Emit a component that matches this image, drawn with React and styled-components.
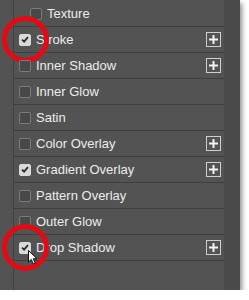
import styled, { createGlobalStyle } from "styled-components"

const Global = createGlobalStyle`
  body {
    margin: 0;
    background: #fff;
    font-family: "Liberation Sans", Arial, sans-serif;
  }
`

const styles = [
  { name: "Texture", indent: true },
  { name: "Stroke", checked: true, plus: true, ring: true },
  { name: "Inner Shadow", plus: true },
  { name: "Inner Glow" },
  { name: "Satin" },
  { name: "Color Overlay", plus: true },
  { name: "Gradient Overlay", checked: true, plus: true },
  { name: "Pattern Overlay" },
  { name: "Outer Glow" },
  { name: "Drop Shadow", checked: true, plus: true, ring: true, cursor: true },
]

const App = () => {
  return (
    <>
      <Global />
      <Panel>
        <Gutter />
        <List>
          {styles.map((s) => (
            <Row key={s.name} $indent={s.indent}>
              <Check $checked={s.checked}>
                {s.checked && (
                  <svg width="8" height="7" viewBox="0 0 8 7">
                    <path d="M1 3.6 L3.1 5.6 L7 1.2" fill="none" stroke="#2e2e2e" strokeWidth="1.9" />
                  </svg>
                )}
              </Check>
              <Label>{s.name}</Label>
              {s.plus && (
                <PlusButton>
                  <svg width="9" height="9" viewBox="0 0 9 9">
                    <rect x="3.5" y="0" width="2" height="9" fill="#f2f2f2" />
                    <rect x="0" y="3.5" width="9" height="2" fill="#f2f2f2" />
                  </svg>
                </PlusButton>
              )}
              {s.ring && <Ring />}
              {s.cursor && (
                <Cursor width="11" height="15" viewBox="0 0 11 15">
                  <path
                    d="M0.5 0.5 L0.5 12 L3.3 9.4 L5.3 14 L7.2 13.2 L5.3 8.7 L9 8.7 Z"
                    fill="#fff"
                    stroke="#111"
                    strokeWidth="1"
                    strokeLinejoin="round"
                  />
                </Cursor>
              )}
            </Row>
          ))}
        </List>
        <Strip />
      </Panel>
    </>
  )
}

const Panel = styled.div`
  display: flex;
  width: 240px;
  height: 290px;
  background: #535353;
  box-shadow: 2px 3px 5px rgba(0, 0, 0, 0.45);
`

const Gutter = styled.div`
  width: 13px;
  flex: none;
`

const List = styled.div`
  flex: 1;
  padding-top: 1px;
  border-left: 1px solid #3f3f3f;
  display: flex;
  flex-direction: column;
`

const Strip = styled.div`
  width: 16px;
  flex: none;
  background: #4a4a4a;
`

const Row = styled.div`
  position: relative;
  height: 25px;
  flex: none;
  display: flex;
  align-items: center;
  gap: 5px;
  padding: 0 3px 0 ${(p) => (p.$indent ? "16px" : "5px")};
  border-bottom: 1px solid #3f3f3f;
`

const Check = styled.span`
  width: 12px;
  height: 12px;
  box-sizing: border-box;
  border-radius: 2px;
  flex: none;
  display: flex;
  align-items: center;
  justify-content: center;
  background: ${(p) => (p.$checked ? "#d9d9d9" : "#484848")};
  border: 1px solid ${(p) => (p.$checked ? "#d9d9d9" : "#7a7a7a")};
`

const Label = styled.span`
  flex: 1;
  color: #ececec;
  font-size: 13px;
  line-height: 1;
  white-space: nowrap;
`

const PlusButton = styled.span`
  width: 15px;
  height: 15px;
  box-sizing: border-box;
  border: 1px solid #cfcfcf;
  flex: none;
  display: flex;
  align-items: center;
  justify-content: center;
`

const Ring = styled.span`
  position: absolute;
  left: -12px;
  top: -11px;
  width: 47px;
  height: 47px;
  box-sizing: border-box;
  border: 5px solid #e50914;
  border-radius: 50%;
  pointer-events: none;
`

const Cursor = styled.svg`
  position: absolute;
  left: 14px;
  top: 15px;
`

export default App
